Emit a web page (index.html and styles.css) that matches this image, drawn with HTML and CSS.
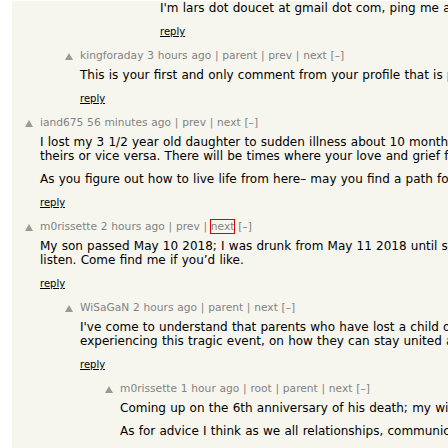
FILE: index.html
```html
<!DOCTYPE html>
<html lang="en">
<head>
<meta charset="utf-8">
<title>Thread</title>
<link rel="stylesheet" href="styles.css">
</head>
<body>
<div class="page">
  <div class="comment l3 first">
    <div class="body">
      <div class="text"><p>I'm lars dot doucet at gmail dot com, ping me anytime if you want to talk about it.</p></div>
      <div class="reply"><a href="#">reply</a></div>
    </div>
  </div>

  <div class="comment l1">
    <div class="head"><svg class="arrow" width="8" height="7" viewBox="0 0 8 7"><polygon points="4,0 8,7 0,7"/></svg><span class="meta">kingforaday 3 hours ago | parent | prev | next [–]</span></div>
    <div class="body">
      <div class="text"><p>This is your first and only comment from your profile that is public. Thank you for sharing it with us.</p></div>
      <div class="reply"><a href="#">reply</a></div>
    </div>
  </div>

  <div class="comment l0">
    <div class="head"><svg class="arrow" width="8" height="7" viewBox="0 0 8 7"><polygon points="4,0 8,7 0,7"/></svg><span class="meta">iand675 56 minutes ago | prev | next [–]</span></div>
    <div class="body">
      <div class="text"><p>I lost my 3 1/2 year old daughter to sudden illness about 10 months ago. My wife and I grieve differently, and<br>theirs or vice versa. There will be times where your love and grief for them feel like the only things left.</p><p>As you figure out how to live life from here– may you find a path forward together.</p></div>
      <div class="reply"><a href="#">reply</a></div>
    </div>
  </div>

  <div class="comment l0">
    <div class="head"><svg class="arrow" width="8" height="7" viewBox="0 0 8 7"><polygon points="4,0 8,7 0,7"/></svg><span class="meta">m0rissette 2 hours ago | prev | <a href="#" class="focus">next</a> [–]</span></div>
    <div class="body">
      <div class="text"><p>My son passed May 10 2018; I was drunk from May 11 2018 until sober again in 2020. I'm here if you need someone to<br>listen. Come find me if you’d like.</p></div>
      <div class="reply"><a href="#">reply</a></div>
    </div>
  </div>

  <div class="comment l1">
    <div class="head"><svg class="arrow" width="8" height="7" viewBox="0 0 8 7"><polygon points="4,0 8,7 0,7"/></svg><span class="meta">WiSaGaN 2 hours ago | parent | next [–]</span></div>
    <div class="body">
      <div class="text"><p>I've come to understand that parents who have lost a child often struggle together. Any advice for couples<br>experiencing this tragic event, on how they can stay united and support each other?</p></div>
      <div class="reply"><a href="#">reply</a></div>
    </div>
  </div>

  <div class="comment l2">
    <div class="head"><svg class="arrow" width="8" height="7" viewBox="0 0 8 7"><polygon points="4,0 8,7 0,7"/></svg><span class="meta">m0rissette 1 hour ago | root | parent | next [–]</span></div>
    <div class="body">
      <div class="text"><p>Coming up on the 6th anniversary of his death; my wife and I are still together.</p><p>As for advice I think as we all relationships, communication is the key to everything that follows.</p><p>Talk to one another, and keep talking, even when it is hard.</p></div>
      <div class="reply"><a href="#">reply</a></div>
    </div>
  </div>
</div>
</body>
</html>
```

FILE: styles.css
```css
html, body {
  margin: 0;
  padding: 0;
  background: #ffffff;
  overflow: hidden;
}

.page {
  margin-left: 12px;
  width: 1400px;
  min-height: 448px;
  background: #f6f6ef;
  font-family: "DejaVu Sans", Verdana, sans-serif;
  padding-top: 0;
}

.comment.l0 { padding-left: 13px; }
.comment.l1 { padding-left: 53px; }
.comment.l2 { padding-left: 93px; }
.comment.l3 { padding-left: 133px; }

.head {
  display: flex;
  align-items: flex-start;
  margin-top: 10px;
  height: 14px;
  line-height: 14px;
  font-size: 10.67px;
  word-spacing: 0.36px;
  color: #828282;
  white-space: nowrap;
}

.arrow {
  display: block;
  width: 8px;
  height: 7px;
  margin-top: 4px;
  margin-right: 7px;
  fill: #9a9a9a;
}

.meta a {
  color: #828282;
  text-decoration: none;
}

.meta a.focus {
  outline: 1px solid #e00000;
  outline-offset: 0;
}

.body {
  padding-left: 15px;
}

.text {
  margin-top: 5px;
  font-size: 12px;
  line-height: 14px;
  word-spacing: 0.4px;
  color: #000000;
  white-space: nowrap;
}

.first .text {
  margin-top: 1px;
}

.text p {
  margin: 9px 0 0 0;
}

.text p:first-child {
  margin-top: 0;
}

.reply {
  margin-top: 9px;
  font-size: 10px;
  line-height: 15px;
}

.reply a {
  color: #000000;
  text-decoration: underline;
}
```
